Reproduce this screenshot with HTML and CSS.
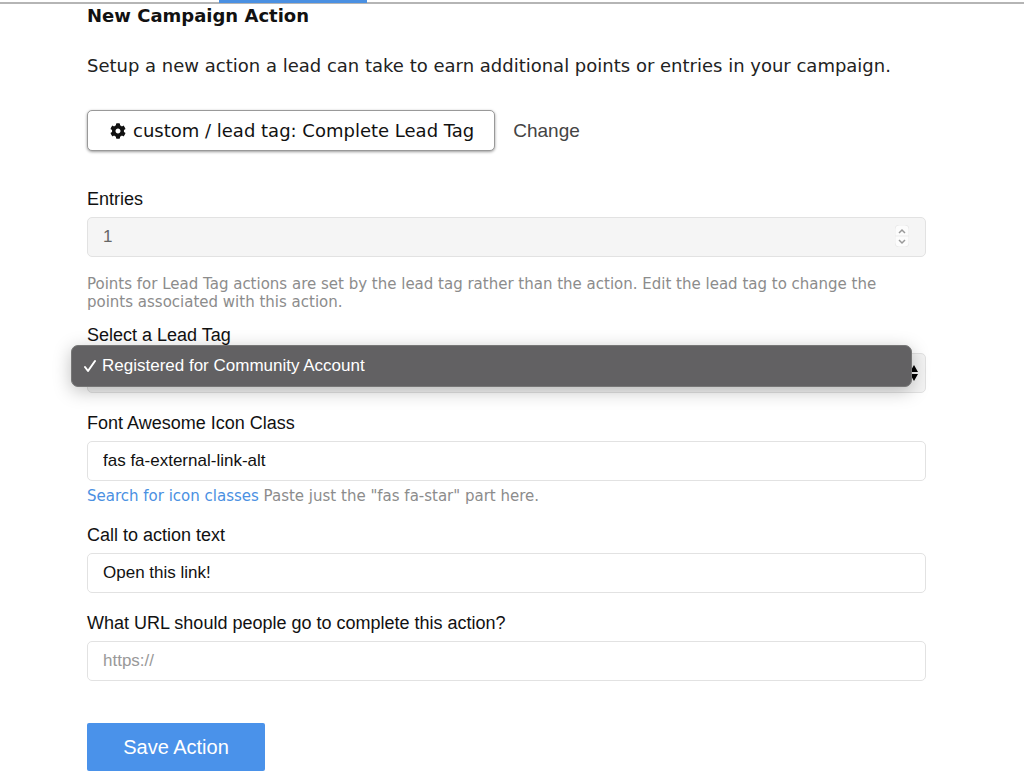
FILE: index.html
```html
<!doctype html>
<html lang="en">
  <head>
    <title>New Campaign Action</title>
    <meta charset="UTF-8" />
    <meta name="viewport" content="width=device-width, initial-scale=1" />
    <link rel="stylesheet" href="styles.css">
  </head>

  <body>
    <div class="tab-bar">
      <div class="active-tab"></div>
    </div>

    <main class="content">
      <h1 class="title">New Campaign Action</h1>
      <p class="intro">Setup a new action a lead can take to earn additional points or entries in your campaign.</p>

      <div class="action-type">
        <button class="type-button" type="button">
          <svg class="gear" viewBox="0 0 512 512" aria-hidden="true">
            <path fill="currentColor" fill-rule="evenodd" d="M487.4 315.7l-42.6-24.6c4.3-23.2 4.3-47 0-70.2l42.6-24.6c4.9-2.8 7.1-8.6 5.5-14-11.1-35.6-30-67.8-54.7-94.6-3.8-4.1-10-5.1-14.8-2.3L380.8 110c-17.9-15.4-38.5-27.3-60.8-35.1V25.8c0-5.6-3.9-10.5-9.4-11.7-36.7-8.2-74.3-7.8-109.2 0-5.5 1.2-9.4 6.1-9.4 11.7V75c-22.2 7.9-42.8 19.8-60.8 35.1L88.7 85.5c-4.9-2.8-11-1.9-14.8 2.3-24.7 26.7-43.6 58.9-54.7 94.6-1.7 5.4.6 11.2 5.5 14L67.3 221c-4.3 23.2-4.3 47 0 70.2l-42.6 24.6c-4.9 2.8-7.1 8.6-5.5 14 11.1 35.6 30 67.8 54.7 94.6 3.8 4.1 10 5.1 14.8 2.3l42.6-24.6c17.9 15.4 38.5 27.3 60.8 35.1v49.2c0 5.6 3.9 10.5 9.4 11.7 36.7 8.2 74.3 7.8 109.2 0 5.5-1.2 9.4-6.1 9.4-11.7v-49.2c22.2-7.9 42.8-19.8 60.8-35.1l42.6 24.6c4.9 2.8 11 1.9 14.8-2.3 24.7-26.7 43.6-58.9 54.7-94.6 1.5-5.5-.7-11.3-5.6-14.1zM256 336c-44.1 0-80-35.9-80-80s35.9-80 80-80 80 35.9 80 80-35.9 80-80 80z" />
          </svg>
          custom / lead tag: Complete Lead Tag
        </button>
        <a class="change-link" href="#">Change</a>
      </div>

      <form>
        <div class="field entries-field">
          <label for="entries">Entries</label>
          <div class="control">
            <input type="number" id="entries" name="entries" value="1" disabled />
            <svg class="stepper" viewBox="0 0 14 22" aria-hidden="true">
              <rect width="14" height="22" rx="4" fill="#fcfcfc" stroke="#ebebeb" />
              <path d="M0 11h14" stroke="#ebebeb" />
              <path d="M4 8l3-3 3 3M4 15l3 3 3-3" fill="none" stroke="#999" stroke-width="1.5" />
            </svg>
          </div>
          <p class="help">Points for Lead Tag actions are set by the lead tag rather than the action. Edit the lead tag to change the points associated with this action.</p>
        </div>

        <div class="field">
          <label for="lead-tag">Select a Lead Tag</label>
          <div class="control">
            <select id="lead-tag" name="lead-tag">
              <option>Registered for Community Account</option>
            </select>
            <svg class="arrows" viewBox="0 0 8 16" aria-hidden="true">
              <path d="M4 0l4 7H0zM4 16l4-7H0z" />
            </svg>
            <div class="menu">
              <svg class="check" viewBox="0 0 12 14" aria-hidden="true">
                <path d="M1 8l3 4L11 2" fill="none" stroke="#fff" stroke-width="2" stroke-linecap="round" stroke-linejoin="round" />
              </svg>
              <span>Registered for Community Account</span>
            </div>
          </div>
        </div>

        <div class="field">
          <label for="icon-class">Font Awesome Icon Class</label>
          <input type="text" id="icon-class" name="icon-class" value="fas fa-external-link-alt" />
          <p class="help"><a href="#">Search for icon classes</a> Paste just the "fas fa-star" part here.</p>
        </div>

        <div class="field">
          <label for="cta">Call to action text</label>
          <input type="text" id="cta" name="cta" value="Open this link!" />
        </div>

        <div class="field">
          <label for="url">What URL should people go to complete this action?</label>
          <input type="text" id="url" name="url" placeholder="https://" />
        </div>

        <button class="save-button" type="submit">Save Action</button>
      </form>
    </main>
  </body>
</html>
```

FILE: styles.css
```css
* {
  box-sizing: border-box;
}

body {
  margin: 0;
  background-color: #fff;
  color: #111;
  font-family: 'Liberation Sans', Arial, sans-serif;
}

.tab-bar {
  height: 4px;
  padding-left: 219px;
  background: linear-gradient(#fff 2px, #b5b5b5 2px);
}

.active-tab {
  width: 148px;
  height: 3px;
  background-color: #4a90e2;
}

.content {
  padding: 0 98px 0 87px;
}

.title,
.intro,
.help,
.type-button {
  font-family: 'DejaVu Sans', Verdana, sans-serif;
}

.title {
  margin: 0;
  font-size: 18px;
  line-height: 24px;
}

.intro {
  margin: 26px 0 0;
  color: #222;
  font-size: 18px;
  line-height: 24px;
}

.action-type {
  display: flex;
  align-items: center;
  gap: 18px;
  margin: 32px 0 36px;
}

.type-button {
  display: flex;
  align-items: center;
  gap: 7px;
  height: 41px;
  padding: 0 20px 0 22px;
  border: 1px solid #999;
  border-radius: 5px;
  background-color: #fff;
  box-shadow: 0 1px 3px rgba(0, 0, 0, 0.4);
  color: #111;
  font-size: 18px;
}

.gear {
  width: 16px;
  height: 16px;
}

.change-link {
  color: #444;
  font-size: 19px;
  text-decoration: none;
}

.field {
  margin-bottom: 18px;
}

label {
  display: block;
  margin-bottom: 6px;
  font-size: 18px;
  line-height: 24px;
}

.control {
  position: relative;
}

input,
select {
  display: block;
  width: 100%;
  height: 40px;
  padding: 0 15px;
  border: 1px solid #e2e2e2;
  border-radius: 5px;
  background-color: #fff;
  color: #111;
  font-family: inherit;
  font-size: 17px;
}

input::placeholder {
  color: #999;
}

input[type='number'] {
  appearance: textfield;
  background-color: #f5f5f5;
  color: #666;
}

select {
  appearance: none;
  background-color: #f3f3f3;
}

.stepper {
  position: absolute;
  top: 8px;
  right: 17px;
  width: 14px;
  height: 22px;
}

.arrows {
  position: absolute;
  top: 12px;
  right: 8px;
  width: 8px;
  height: 16px;
}

/* open drop-down, lies over the select */
.menu {
  position: absolute;
  top: -8px;
  left: -16px;
  right: 14px;
  display: flex;
  align-items: center;
  gap: 6px;
  height: 42px;
  padding: 0 12px;
  border: 1px solid #777;
  border-radius: 7px;
  background-color: #626163;
  box-shadow: 0 4px 18px rgba(0, 0, 0, 0.25);
  color: #fff;
  font-size: 17px;
}

.check {
  width: 12px;
  height: 14px;
}

.help {
  margin: 6px 0 0;
  color: #8c8c8c;
  font-size: 15px;
  line-height: 18px;
}

.entries-field {
  margin-bottom: 12px;
}

.entries-field .help {
  margin-top: 18px;
}

.help a {
  color: #4a90e2;
  text-decoration: none;
}

.save-button {
  width: 178px;
  height: 48px;
  margin: 24px 0 6px;
  border: none;
  border-radius: 2px;
  background-color: #4a92ea;
  color: #fff;
  font-family: inherit;
  font-size: 20px;
}
```
